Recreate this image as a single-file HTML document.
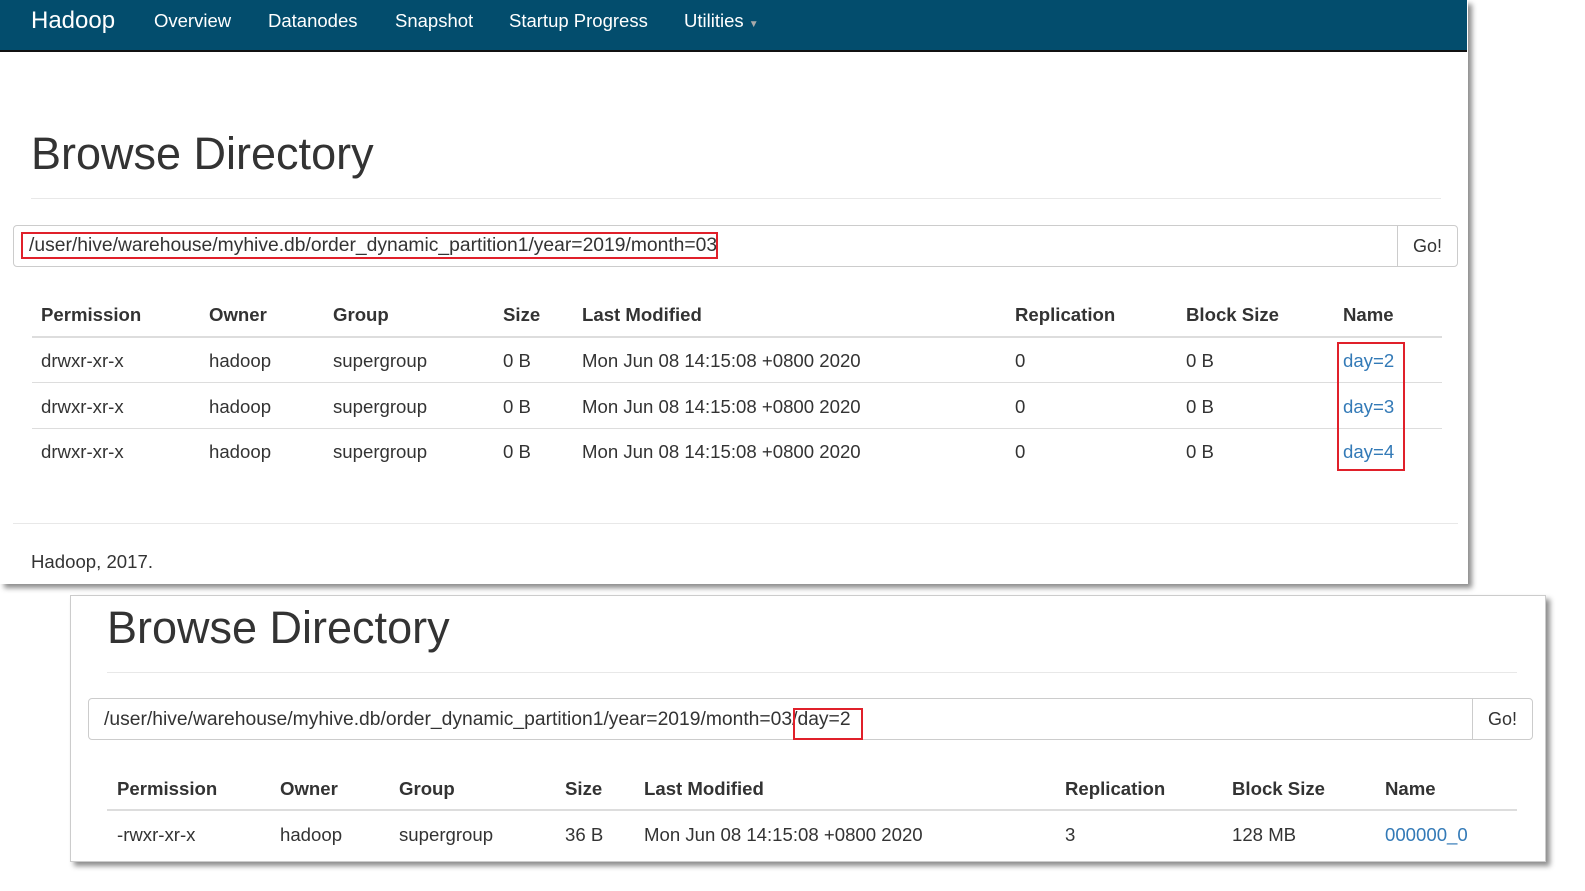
<!DOCTYPE html>
<html><head><meta charset="utf-8"><style>
*{margin:0;padding:0;box-sizing:border-box}
body{width:1585px;height:891px;background:#fff;position:relative;overflow:hidden;font-family:"Liberation Sans",sans-serif;color:#333}
.p{position:absolute;background:#fff;border:1px solid #ccc;box-shadow:4px 4px 5px rgba(0,0,0,.45)}
.t{position:absolute;white-space:nowrap;font-size:18.6px;line-height:20px}
.b{font-weight:bold}
.nav{position:absolute;left:0;top:0;width:1467px;height:52px;background:#034d6d;border-bottom:2px solid #111}
.n{position:absolute;color:#fff;font-size:18.5px;top:10px;white-space:nowrap}
.h1{position:absolute;font-size:45px;color:#333;white-space:nowrap}
.hr{position:absolute;height:1px;background:#e8e8e8}
.in{position:absolute;border:1px solid #ccc;border-radius:4px;height:42px}
.go{position:absolute;top:0;right:0;height:40px;border-left:1px solid #ccc;font-size:18px;line-height:40px;text-align:center}
.red{position:absolute;border:2px solid #e0202a}
.l{color:#337ab7}
.pa{font-size:19.3px}
</style></head><body>
<div class="p" style="left:0;top:0;width:1468px;height:584px;border:none"></div>
<div class="nav"></div>
<div class="n" style="left:31px;top:7px;font-size:24px">Hadoop</div>
<div class="n" style="left:154px">Overview</div>
<div class="n" style="left:268px">Datanodes</div>
<div class="n" style="left:395px">Snapshot</div>
<div class="n" style="left:509px">Startup Progress</div>
<div class="n" style="left:684px">Utilities <span style="font-size:10px;color:#aaa">▼</span></div>
<div class="h1" style="left:31px;top:128px">Browse Directory</div>
<div class="hr" style="left:31px;top:198px;width:1410px"></div>
<div class="in" style="left:13px;top:225px;width:1445px"><div class="go" style="width:60px">Go!</div></div>
<div class="t pa" style="left:29px;top:236px">/user/hive/warehouse/myhive.db/order_dynamic_partition1/year=2019/month=03</div>
<div class="red" style="left:21px;top:232px;width:697px;height:27px"></div>
<div class="t b" style="left:41px;top:305px">Permission</div>
<div class="t b" style="left:209px;top:305px">Owner</div>
<div class="t b" style="left:333px;top:305px">Group</div>
<div class="t b" style="left:503px;top:305px">Size</div>
<div class="t b" style="left:582px;top:305px">Last Modified</div>
<div class="t b" style="left:1015px;top:305px">Replication</div>
<div class="t b" style="left:1186px;top:305px">Block Size</div>
<div class="t b" style="left:1343px;top:305px">Name</div>
<div class="hr" style="left:32px;top:336px;width:1410px;height:2px;background:#ddd"></div>
<div class="hr" style="left:32px;top:382px;width:1410px;background:#ddd"></div>
<div class="hr" style="left:32px;top:428px;width:1410px;background:#ddd"></div>
<div class="t" style="left:41px;top:351px">drwxr-xr-x</div><div class="t" style="left:209px;top:351px">hadoop</div><div class="t" style="left:333px;top:351px">supergroup</div><div class="t" style="left:503px;top:351px">0 B</div><div class="t" style="left:582px;top:351px">Mon Jun 08 14:15:08 +0800 2020</div><div class="t" style="left:1015px;top:351px">0</div><div class="t" style="left:1186px;top:351px">0 B</div><div class="t l" style="left:1343px;top:351px">day=2</div>
<div class="t" style="left:41px;top:397px">drwxr-xr-x</div><div class="t" style="left:209px;top:397px">hadoop</div><div class="t" style="left:333px;top:397px">supergroup</div><div class="t" style="left:503px;top:397px">0 B</div><div class="t" style="left:582px;top:397px">Mon Jun 08 14:15:08 +0800 2020</div><div class="t" style="left:1015px;top:397px">0</div><div class="t" style="left:1186px;top:397px">0 B</div><div class="t l" style="left:1343px;top:397px">day=3</div>
<div class="t" style="left:41px;top:442px">drwxr-xr-x</div><div class="t" style="left:209px;top:442px">hadoop</div><div class="t" style="left:333px;top:442px">supergroup</div><div class="t" style="left:503px;top:442px">0 B</div><div class="t" style="left:582px;top:442px">Mon Jun 08 14:15:08 +0800 2020</div><div class="t" style="left:1015px;top:442px">0</div><div class="t" style="left:1186px;top:442px">0 B</div><div class="t l" style="left:1343px;top:442px">day=4</div>
<div class="red" style="left:1337px;top:342px;width:68px;height:129px"></div>
<div class="hr" style="left:13px;top:523px;width:1445px"></div>
<div class="t" style="left:31px;top:552px">Hadoop, 2017.</div>

<div class="p" style="left:70px;top:595px;width:1476px;height:267px"></div>
<div class="h1" style="left:107px;top:602px">Browse Directory</div>
<div class="hr" style="left:107px;top:672px;width:1410px"></div>
<div class="in" style="left:88px;top:698px;width:1445px"><div class="go" style="width:60px">Go!</div></div>
<div class="t pa" style="left:104px;top:710px">/user/hive/warehouse/myhive.db/order_dynamic_partition1/year=2019/month=03/day=2</div>
<div class="red" style="left:793px;top:708px;width:70px;height:32px"></div>
<div class="t b" style="left:117px;top:779px">Permission</div>
<div class="t b" style="left:280px;top:779px">Owner</div>
<div class="t b" style="left:399px;top:779px">Group</div>
<div class="t b" style="left:565px;top:779px">Size</div>
<div class="t b" style="left:644px;top:779px">Last Modified</div>
<div class="t b" style="left:1065px;top:779px">Replication</div>
<div class="t b" style="left:1232px;top:779px">Block Size</div>
<div class="t b" style="left:1385px;top:779px">Name</div>
<div class="hr" style="left:107px;top:809px;width:1410px;height:2px;background:#ddd"></div>
<div class="t" style="left:117px;top:825px">-rwxr-xr-x</div><div class="t" style="left:280px;top:825px">hadoop</div><div class="t" style="left:399px;top:825px">supergroup</div><div class="t" style="left:565px;top:825px">36 B</div><div class="t" style="left:644px;top:825px">Mon Jun 08 14:15:08 +0800 2020</div><div class="t" style="left:1065px;top:825px">3</div><div class="t" style="left:1232px;top:825px">128 MB</div><div class="t l" style="left:1385px;top:825px">000000_0</div>
</body></html>
